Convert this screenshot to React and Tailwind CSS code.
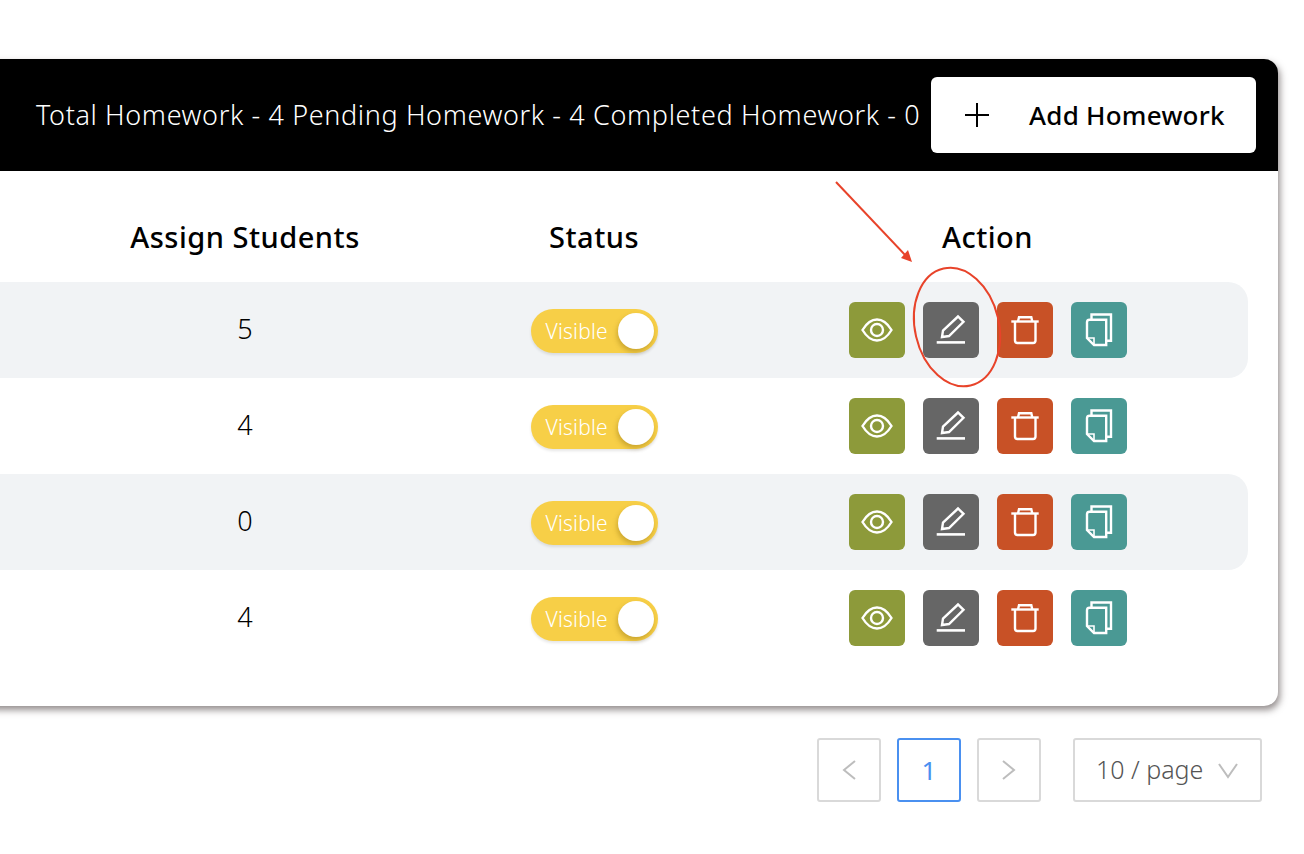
import React from 'react';

const rows = [
  { count: 5, shaded: true },
  { count: 4, shaded: false },
  { count: 0, shaded: true },
  { count: 4, shaded: false },
];

const EyeIcon = () => (
  <svg width="56" height="56" viewBox="0 0 56 56" fill="none" stroke="white" strokeWidth="2.4">
    <path d="M13.5 28C18 20.5 23 17.5 28 17.5S38 20.5 42.5 28C38 35.5 33 38.5 28 38.5S18 35.5 13.5 28Z" />
    <circle cx="28" cy="28" r="6" />
  </svg>
);

const EditIcon = () => (
  <svg width="56" height="56" viewBox="0 0 56 56" fill="none" stroke="white" strokeWidth="2.4">
    <path d="M13.7 40.4H42" strokeWidth="2.6" />
    <path d="M19 35L20 28.5L35 14.5L40.5 19.8L26 34Z" />
  </svg>
);

const TrashIcon = () => (
  <svg width="56" height="56" viewBox="0 0 56 56" fill="none" stroke="white" strokeWidth="2.4">
    <path d="M14.3 19.5H41.7" />
    <path d="M21 19.5L22 15.3H34.3L35.3 19.5" />
    <path d="M18 19.5V38.5A2.5 2.5 0 0 0 20.5 41H36A2.5 2.5 0 0 0 38.5 38.5V19.5" />
  </svg>
);

const CopyIcon = () => (
  <svg width="56" height="56" viewBox="0 0 56 56" fill="none" stroke="white" strokeWidth="2.4">
    <path d="M20.5 17V12.5H40V38.7H36" />
    <path d="M16 20A2.5 2.5 0 0 1 18.5 17.7H35.2V43H23L16 36Z" />
    <path d="M16 36H23V43" strokeWidth="1.6" />
  </svg>
);

const Chevron = ({ d, w = 16, h = 24, color = '#bdbdbd' }) => (
  <svg width={w} height={h} viewBox={`0 0 ${w} ${h}`} fill="none" stroke={color} strokeWidth="2">
    <path d={d} />
  </svg>
);

const Toggle = () => (
  <div className="mt-[2px] flex h-[44px] w-[127px] items-center justify-between rounded-full bg-[#f7cf47] pl-[15px] pr-[4px] shadow-[0_2px_3px_rgba(0,0,0,0.1)]">
    <span className="mt-[1px] text-[21px] font-light tracking-[0.2px] text-white">Visible</span>
    <span className="h-[36px] w-[36px] rounded-full bg-white shadow-[-1px_3px_5px_rgba(120,90,0,0.35)]"></span>
  </div>
);

const Row = ({ count, shaded }) => (
  <div className={`grid h-[96px] grid-cols-[490px_208px_1fr] items-center ${shaded ? 'rounded-r-[20px] bg-[#f1f3f5]' : ''}`}>
    <p className="mb-[2px] text-center text-[27px] font-light text-black">{count}</p>
    <div className="flex justify-center"><Toggle /></div>
    <div className="ml-[30px] flex justify-center gap-[18px]">
      <button className="h-[56px] w-[56px] rounded-[6px] bg-[#8d9a3a]"><EyeIcon /></button>
      <button className="h-[56px] w-[56px] rounded-[6px] bg-[#666666]"><EditIcon /></button>
      <button className="h-[56px] w-[56px] rounded-[6px] bg-[#c85126]"><TrashIcon /></button>
      <button className="h-[56px] w-[56px] rounded-[6px] bg-[#4a9994]"><CopyIcon /></button>
    </div>
  </div>
);

export default function App() {
  return (
    <div className="relative h-[854px] w-[1304px] overflow-hidden bg-white font-['Noto_Sans',sans-serif]">
      <div className="pt-[59px]">
        <div className="ml-[-20px] h-[647px] w-[1298px] rounded-[14px] bg-white shadow-[2px_4px_7px_rgba(60,50,50,0.55)]">
          {/* header bar */}
          <div className="flex h-[112px] items-center justify-between rounded-t-[14px] bg-black pl-[56px] pr-[22px]">
            <p className="whitespace-nowrap text-[27px] font-light tracking-[0.63px] text-white">
              Total Homework - 4 Pending Homework - 4 Completed Homework - 0
            </p>
            <button className="flex h-[76px] w-[325px] shrink-0 items-center rounded-[6px] bg-white pl-[33px]">
              <svg width="26" height="26" viewBox="0 0 26 26" fill="none" stroke="black" strokeWidth="2">
                <path d="M13 1V25M1 13H25" />
              </svg>
              <span className="ml-[39px] text-[26px] font-medium tracking-[0.25px] text-black">Add Homework</span>
            </button>
          </div>

          <div className="ml-[20px]">
            <div className="grid h-[111px] w-[1248px] grid-cols-[490px_208px_1fr] items-center pt-[20px]">
              <h3 className="text-center text-[29px] font-medium tracking-[0.5px] text-black">Assign Students</h3>
              <h3 className="text-center text-[29px] font-medium tracking-[0.5px] text-black">Status</h3>
              <h3 className="ml-[29px] text-center text-[29px] font-medium tracking-[0.5px] text-black">Action</h3>
            </div>
            <div className="mr-[30px]">
              {rows.map((row, index) => (
                <Row key={index} count={row.count} shaded={row.shaded} />
              ))}
            </div>
          </div>
        </div>

        {/* pagination */}
        <div className="mt-[32px] flex w-[1262px] justify-end">
          <button className="flex h-[64px] w-[64px] items-center justify-center rounded-[3px] border-2 border-[#d9d9d9]">
            <Chevron d="M14 3L3 12L14 21" />
          </button>
          <button className="ml-[16px] h-[64px] w-[64px] rounded-[3px] border-2 border-[#4a90f0] text-[26px] text-[#4a90f0]">1</button>
          <button className="ml-[16px] flex h-[64px] w-[64px] items-center justify-center rounded-[3px] border-2 border-[#d9d9d9]">
            <Chevron d="M2 3L13 12L2 21" />
          </button>
          <button className="ml-[32px] flex h-[64px] w-[189px] items-center rounded-[3px] border-2 border-[#d9d9d9] pl-[21px] text-[25px] font-light text-[#555555]">
            10 / page
            <span className="ml-[15px]"><Chevron d="M1 2L10 15L19 2" w={20} h={17} /></span>
          </button>
        </div>
      </div>

      {/* red annotation drawn over the table */}
      <svg className="absolute left-0 top-0" width="1304" height="854" fill="none">
        <path d="M836 182L907 257" stroke="#e8432a" strokeWidth="2" />
        <path d="M912 262L901 258L908 250Z" fill="#e8432a" />
        <ellipse cx="957" cy="327" rx="42" ry="60" transform="rotate(-13 957 327)" stroke="#e8432a" strokeWidth="2" />
      </svg>
    </div>
  );
}
